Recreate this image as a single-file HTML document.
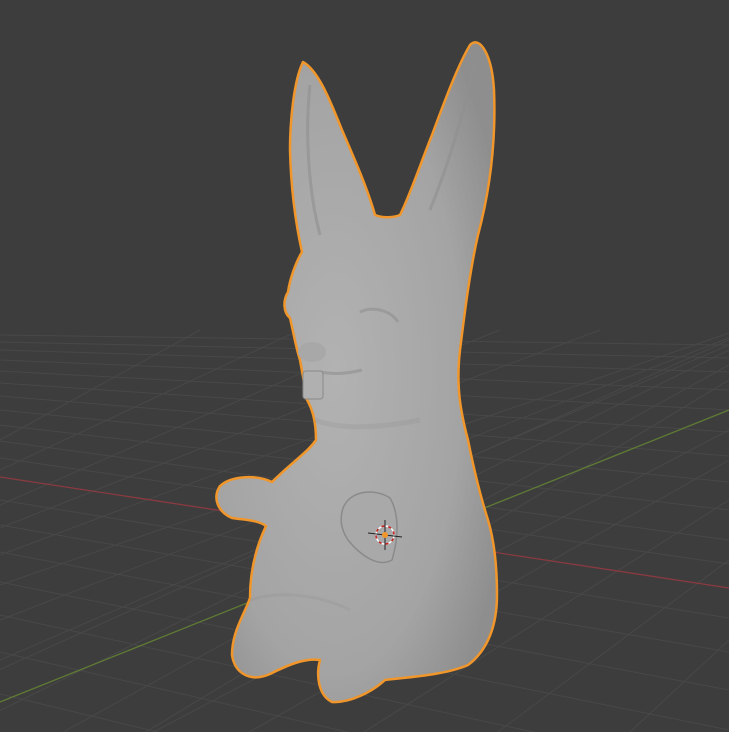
<!DOCTYPE html>
<html><head><style>html,body{margin:0;padding:0;background:#3d3d3d;width:729px;height:732px;overflow:hidden}svg{display:block}</style></head>
<body>
<svg width="729" height="732" viewBox="0 0 729 732" xmlns="http://www.w3.org/2000/svg">
<defs>
<radialGradient id="g" cx="0.42" cy="0.5" r="0.65">
<stop offset="0" stop-color="#b2b2b2"/><stop offset="0.7" stop-color="#a4a4a4"/><stop offset="1" stop-color="#8e8e8e"/>
</radialGradient>
<clipPath id="floor"><rect x="0" y="325" width="729" height="420"/></clipPath>
</defs>
<rect width="729" height="732" fill="#3d3d3d"/>
<g clip-path="url(#floor)" stroke="#484848" stroke-width="1" fill="none">
<line x1="0" y1="335" x2="729" y2="345"/>
<line x1="0" y1="342" x2="729" y2="358"/>
<line x1="0" y1="350" x2="729" y2="372"/>
<line x1="0" y1="360" x2="729" y2="390"/>
<line x1="0" y1="371" x2="729" y2="410"/>
<line x1="0" y1="383" x2="729" y2="432"/>
<line x1="0" y1="396" x2="729" y2="456"/>
<line x1="0" y1="410" x2="729" y2="482"/>
<line x1="0" y1="425" x2="729" y2="510"/>
<line x1="0" y1="441" x2="729" y2="540"/>
<line x1="0" y1="458" x2="729" y2="564"/>
<line x1="0" y1="500" x2="729" y2="618"/>
<line x1="0" y1="525" x2="729" y2="652"/>
<line x1="0" y1="552" x2="729" y2="690"/>
<line x1="0" y1="582" x2="729" y2="730"/>
<line x1="0" y1="615" x2="729" y2="775"/>
<line x1="0" y1="652" x2="729" y2="820"/>
<line x1="0" y1="694" x2="729" y2="870"/>
<line x1="-200" y1="760" x2="729" y2="340"/>
<line x1="-100" y1="760" x2="729" y2="350"/>
<line x1="-60" y1="800" x2="729" y2="365"/>
<line x1="0" y1="820" x2="729" y2="380"/>
<line x1="0" y1="660" x2="729" y2="345"/>
<line x1="0" y1="620" x2="729" y2="338"/>
<line x1="0" y1="585" x2="729" y2="333"/>
<line x1="0" y1="555" x2="600" y2="330"/>
<line x1="0" y1="528" x2="500" y2="330"/>
<line x1="0" y1="505" x2="400" y2="330"/>
<line x1="0" y1="470" x2="300" y2="330"/>
<line x1="0" y1="440" x2="200" y2="330"/>
<line x1="100" y1="760" x2="729" y2="430"/>
<line x1="200" y1="760" x2="729" y2="460"/>
<line x1="320" y1="760" x2="729" y2="500"/>
<line x1="460" y1="760" x2="729" y2="560"/>
<line x1="600" y1="760" x2="729" y2="640"/>
</g>
<line x1="0" y1="477" x2="729" y2="588" stroke="#8a3a40" stroke-width="1.3"/>
<line x1="0" y1="702" x2="729" y2="410" stroke="#5f7a35" stroke-width="1.3"/>
<path fill="url(#g)" stroke="#f0962a" stroke-width="2.5" stroke-linejoin="round" d="
M303,62 C294,80 290,120 290,150 C291,190 296,225 302,252 C296,262 290,278 288,292 C283,300 283,312 290,318
C294,335 296,348 300,360 C302,372 305,385 306,398 C312,408 316,420 316,440 C308,452 292,462 272,482
C258,475 232,475 220,486 C212,498 218,512 232,518 C245,520 258,520 266,526 C257,545 250,568 250,598
C244,615 232,632 232,655 C235,675 252,682 270,674 C290,664 305,658 320,660 C316,675 318,695 332,702
C350,703 372,692 385,680 C410,677 445,675 468,665 C488,650 497,625 497,595 C497,565 494,540 488,520
C480,495 474,470 468,440 C460,410 456,385 460,350 C465,310 470,270 478,235 C490,190 496,140 494,90
C492,55 480,35 470,45 C458,65 445,100 432,135 C420,165 410,195 400,215 C392,218 382,218 375,215
C368,190 355,160 342,130 C330,100 318,70 303,62 Z"/>
<g fill="none" stroke="#8f8f8f" stroke-width="3" opacity="0.6">
<path d="M310,85 C305,130 308,190 320,235"/>
<path d="M475,60 C465,110 450,160 430,210"/>
<path d="M360,312 C375,305 392,312 398,322"/>
<path d="M320,372 C335,375 350,373 362,370"/>
<path d="M315,420 C340,430 380,428 420,420" stroke-width="5" opacity="0.4"/>
<path d="M250,600 C280,590 320,595 350,610" opacity="0.4"/>
</g>
<rect x="303" y="371" width="20" height="28" rx="3" fill="#b0b0b0" stroke="#8a8a8a"/>
<ellipse cx="312" cy="352" rx="14" ry="10" fill="#a8a8a8"/>
<path d="M343,508 C350,490 375,488 390,498 C400,515 398,540 392,560 C378,568 360,555 348,540 C340,528 340,518 343,508 Z" fill="#a9a9a9" stroke="#8a8a8a" stroke-width="1.5"/>
<circle cx="385" cy="535" r="9" fill="none" stroke="#fff" stroke-width="1.5" stroke-dasharray="4 3"/>
<circle cx="385" cy="535" r="9" fill="none" stroke="#d02020" stroke-width="1.5" stroke-dasharray="3 4" stroke-dashoffset="3.5"/>
<line x1="385" y1="520" x2="385" y2="550" stroke="#222" stroke-width="1"/>
<line x1="368" y1="533" x2="402" y2="537" stroke="#222" stroke-width="1"/>
<circle cx="385" cy="535" r="3" fill="#f0962a"/>
</svg>
</body></html>
